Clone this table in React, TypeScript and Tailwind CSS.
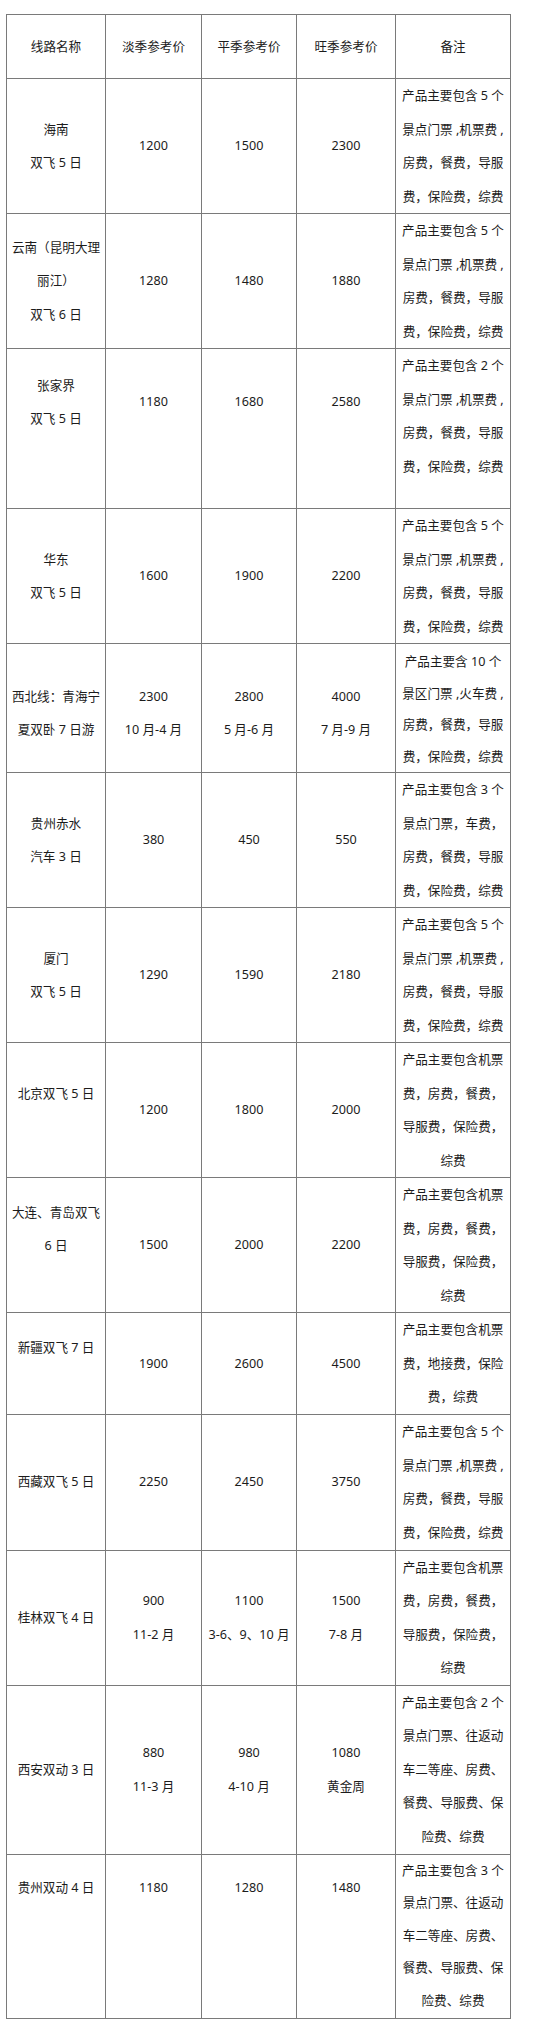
const five = ["产品主要包含 5 个", "景点门票 ,机票费 ,", "房费，餐费，导服", "费，保险费，综费"];
const flight = ["产品主要包含机票", "费，房费，餐费，", "导服费，保险费，", "综费"];
const train = (n: string) => [`产品主要包含 ${n} 个`, "景点门票、往返动", "车二等座、房费、", "餐费、导服费、保", "险费、综费"];

type Row = {
  h: string;
  name: string[];
  prices: string[][];
  notes: string[];
  nameCls?: string;
  priceCls?: string;
  noteCls?: string;
};

const rows: Row[] = [
  { h: "h-[134px]", name: ["海南", "双飞 5 日"], prices: [["1200"], ["1500"], ["2300"]], notes: five },
  { h: "h-[135px]", name: ["云南（昆明大理", "丽江）", "双飞 6 日"], prices: [["1280"], ["1480"], ["1880"]], notes: five },
  {
    h: "h-[158px]",
    name: ["张家界", "双飞 5 日"],
    prices: [["1180"], ["1680"], ["2580"]],
    notes: ["产品主要包含 2 个", "景点门票 ,机票费 ,", "房费，餐费，导服", "费，保险费，综费"],
    nameCls: "pb-[53px]",
    priceCls: "pb-[53px]",
    noteCls: "pb-[25px]",
  },
  { h: "h-[134px]", name: ["华东", "双飞 5 日"], prices: [["1600"], ["1900"], ["2200"]], notes: five },
  {
    h: "h-[129px]",
    name: ["西北线：青海宁", "夏双卧 7 日游"],
    prices: [["2300", "10 月-4 月"], ["2800", "5 月-6 月"], ["4000", "7 月-9 月"]],
    notes: ["产品主要含 10 个", "景区门票 ,火车费 ,", "房费，餐费，导服", "费，保险费，综费"],
    nameCls: "pt-[10px]",
    priceCls: "pt-[10px]",
    noteCls: "leading-[31.5px] pt-[2px]",
  },
  {
    h: "h-[135px]",
    name: ["贵州赤水", "汽车 3 日"],
    prices: [["380"], ["450"], ["550"]],
    notes: ["产品主要包含 3 个", "景点门票，车费，", "房费，餐费，导服", "费，保险费，综费"],
  },
  { h: "h-[135px]", name: ["厦门", "双飞 5 日"], prices: [["1290"], ["1590"], ["2180"]], notes: five },
  { h: "h-[135px]", name: ["北京双飞 5 日"], prices: [["1200"], ["1800"], ["2000"]], notes: flight, nameCls: "pb-[33px]" },
  { h: "h-[135px]", name: ["大连、青岛双飞", "6 日"], prices: [["1500"], ["2000"], ["2200"]], notes: flight, nameCls: "pb-[32px]" },
  {
    h: "h-[101px]",
    name: ["新疆双飞 7 日"],
    prices: [["1900"], ["2600"], ["4500"]],
    notes: ["产品主要包含机票", "费，地接费，保险", "费，综费"],
    nameCls: "pb-[32px]",
  },
  { h: "h-[136px]", name: ["西藏双飞 5 日"], prices: [["2250"], ["2450"], ["3750"]], notes: five },
  {
    h: "h-[134px]",
    name: ["桂林双飞 4 日"],
    prices: [["900", "11-2 月"], ["1100", "3-6、9、10 月"], ["1500", "7-8 月"]],
    notes: flight,
  },
  {
    h: "h-[169px]",
    name: ["西安双动 3 日"],
    prices: [["880", "11-3 月"], ["980", "4-10 月"], ["1080", "黄金周"]],
    notes: train("2"),
  },
  {
    h: "h-[164px]",
    name: ["贵州双动 4 日"],
    prices: [["1180"], ["1280"], ["1480"]],
    notes: train("3"),
    nameCls: "pb-[96px]",
    priceCls: "pb-[96px]",
    noteCls: "leading-[32.5px]",
  },
];

const cell = "border border-[#7a7a7a] p-0 text-center align-middle";

function Lines({ items, className = "" }: { items: string[]; className?: string }) {
  return (
    <div className={`whitespace-nowrap ${className}`}>
      {items.map((t, i) => (
        <div key={i}>{t}</div>
      ))}
    </div>
  );
}

export default function App() {
  return (
    <div
      className="min-h-[2033px] w-[540px] bg-white pl-[6px] pt-[14px] text-[12.6px] leading-[33.5px] text-[#1c1c1c]"
      style={{ fontFamily: '"Noto Sans", "Noto Sans CJK SC", sans-serif' }}
    >
      <table className="w-[504px] table-fixed border-collapse">
        <colgroup>
          <col className="w-[99px]" />
          <col className="w-[96px]" />
          <col className="w-[95px]" />
          <col className="w-[99px]" />
          <col className="w-[115px]" />
        </colgroup>
        <thead>
          <tr className="h-[64px]">
            {["线路名称", "淡季参考价", "平季参考价", "旺季参考价", "备注"].map((h) => (
              <th key={h} className={`${cell} font-normal`}>
                {h}
              </th>
            ))}
          </tr>
        </thead>
        <tbody>
          {rows.map((r, i) => (
            <tr key={i} className={r.h}>
              <td className={cell}>
                <Lines items={r.name} className={r.nameCls} />
              </td>
              {r.prices.map((p, j) => (
                <td key={j} className={cell}>
                  <Lines items={p} className={r.priceCls} />
                </td>
              ))}
              <td className={`${cell} px-[5px]`}>
                <Lines items={r.notes} className={r.noteCls} />
              </td>
            </tr>
          ))}
        </tbody>
      </table>
    </div>
  );
}
